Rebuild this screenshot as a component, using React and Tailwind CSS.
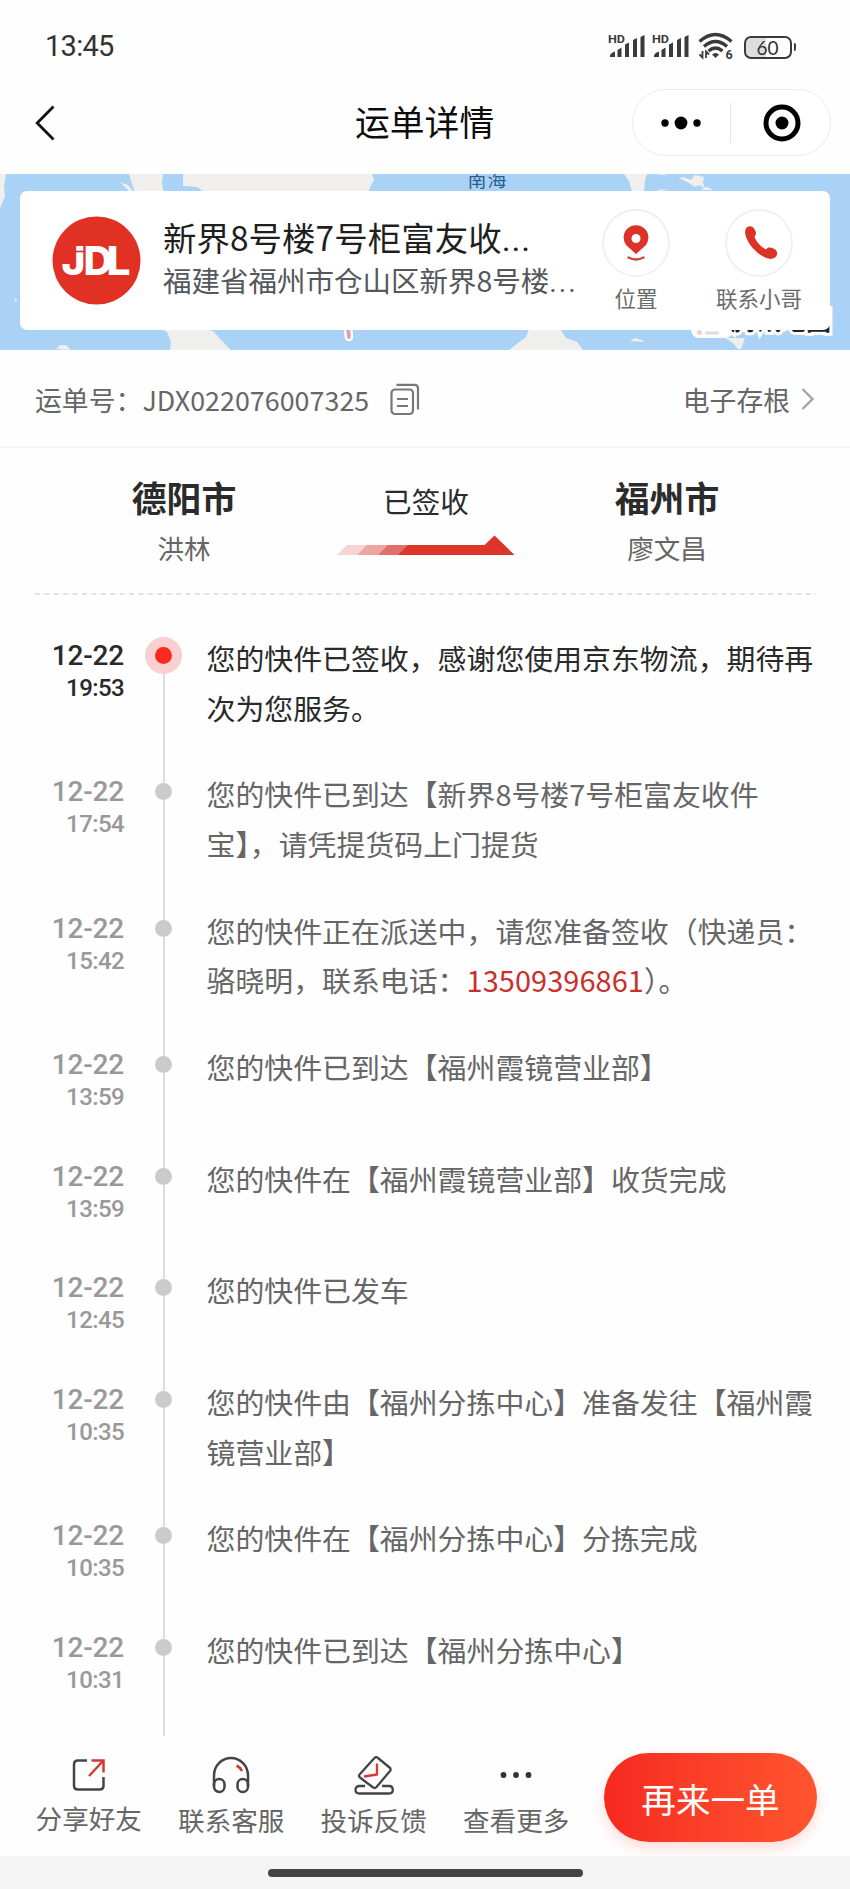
import React from 'react';

const EVENTS = [
    { id: 1, date: '12-22', time: '19:53', text: '您的快件已签收，感谢您使用京东物流，期待再次为您服务。', rows: 2, active: true },
    { id: 2, date: '12-22', time: '17:54', text: '您的快件已到达【新界8号楼7号柜富友收件宝】，请凭提货码上门提货', rows: 2 },
    { id: 3, date: '12-22', time: '15:42', text: '您的快件正在派送中，请您准备签收（快递员：骆晓明，联系电话：', phone: '13509396861', tail: '）。', rows: 2 },
    { id: 4, date: '12-22', time: '13:59', text: '您的快件已到达【福州霞镜营业部】', rows: 1 },
    { id: 5, date: '12-22', time: '13:59', text: '您的快件在【福州霞镜营业部】收货完成', rows: 1 },
    { id: 6, date: '12-22', time: '12:45', text: '您的快件已发车', rows: 1 },
    { id: 7, date: '12-22', time: '10:35', text: '您的快件由【福州分拣中心】准备发往【福州霞镜营业部】', rows: 2 },
    { id: 8, date: '12-22', time: '10:35', text: '您的快件在【福州分拣中心】分拣完成', rows: 1 },
    { id: 9, date: '12-22', time: '10:31', text: '您的快件已到达【福州分拣中心】', rows: 1 },
];

const Signal = () => (
    <svg className="overflow-visible" width="37" height="24" viewBox="0 0 37 24" fill="#3a3a3a">
        <text x="-1" y="8.600" fontSize="11.500" fontWeight="700" textLength="17" lengthAdjust="spacingAndGlyphs" fontFamily="Roboto, sans-serif">HD</text>
        <path d="M1 23v-1.500q1-3 5-4V23zM8.500 23v-7l4-2.500V23zM16 23V10.500l4-2v14.500zM24 23V6l4-2V23zM31.500 23V3l4-2v22z" />
    </svg>
);

const Wifi = () => (
    <svg className="overflow-visible" width="36" height="27" viewBox="0 0 36 27" fill="none" stroke="#3a3a3a">
        <path d="M1.500 8.500Q17.500-5.500 33.500 8.500" strokeWidth="3.400" />
        <path d="M6 13.500Q17.500 3.500 29 13.500" strokeWidth="3.400" />
        <path d="M10.500 18Q17.500 12 24.500 18" strokeWidth="3.400" />
        <path d="M14 21.500Q17.500 18.500 21 21.500L17.500 25z" fill="#3a3a3a" stroke="none" />
        <path d="M4.500 18v6.500L1.500 21.500M8 25v-6.500l3 3" strokeWidth="1.800" />
        <text x="27.500" y="25.500" fontSize="12.500" fontWeight="700" fill="#3a3a3a" stroke="none" fontFamily="Roboto, sans-serif">6</text>
    </svg>
);

const StatusBar = () => (
    <div className="flex h-[70px] items-start justify-between pl-[45px] pr-[54px]">
        <span className="mt-[29px] font-['Roboto'] text-[29px] leading-[34px] tracking-[-0.7px] text-[#333]">13:45</span>
        <div className="mt-[34px] flex">
            <Signal />
            <div className="ml-[7px]"><Signal /></div>
            <div className="ml-[8px] -mt-px"><Wifi /></div>
            <div className="ml-[10px] flex items-center">
                <div className="flex h-[23px] w-[48px] items-center justify-center rounded-[7px] border-2 border-[#3a3a3a] bg-linear-to-r from-[#dedede] from-45% to-white to-45% font-['Lato'] text-[19px] leading-[19px] text-[#333]">60</div>
                <div className="ml-[2px] h-[8px] w-[2.5px] rounded-r bg-[#3a3a3a]" />
            </div>
        </div>
    </div>
);

const Header = () => (
    <div className="flex h-[104px] items-start pt-[19px]">
        <svg className="ml-[34px] mt-[15px]" width="24" height="38" viewBox="0 0 24 38" fill="none" stroke="#111" strokeWidth="2.800">
            <path d="M19.500 2.500L3.200 19L19.500 35.500" />
        </svg>
        <h1 className="ml-[297px] mt-[7px] text-[34.8px] leading-[50px] text-[#0c0c0c]">运单详情</h1>
        <div className="ml-auto mr-[19px] flex h-[67px] w-[199px] items-center rounded-full border border-[#ececec] bg-white">
            <div className="flex flex-1 justify-center">
                <svg width="40" height="14" viewBox="0 0 40 14">
                    <circle cx="4" cy="7" r="3.700" />
                    <circle cx="20" cy="7" r="6.400" />
                    <circle cx="36" cy="7" r="3.700" />
                </svg>
            </div>
            <div className="h-[40px] w-px bg-[#e3e3e3]" />
            <div className="flex flex-1 justify-center pl-[3px]">
                <svg width="38" height="38" viewBox="0 0 38 38">
                    <circle cx="19" cy="19" r="16" fill="none" stroke="#000" strokeWidth="5" />
                    <circle cx="19" cy="19" r="6.500" />
                </svg>
            </div>
        </div>
    </div>
);

const MapBackground = () => (
    <svg className="absolute inset-0" width="850" height="176" viewBox="0 0 850 176">
        <rect width="850" height="176" fill="#aad2f6" />
        <g fill="#f0efed">
            <path d="M129 0L131 7L134 16L134 20H164L162 9L163 0z" />
            <path d="M183 0V12L197 13L207 20H368L370 13L374 6L372 0z" />
            <path d="M0 0H6L4 12L5 22L0 34zM14 127l2 -3l1 4zM57 150l2 -1z" />
            <path d="M120 8l8 3l5 6h-4zM56 175l4 -4l6 0l5 5z" />
            <path d="M158 153L167 158L171 168L170 176H231L221 166L214 158L204 153z" />
            <path d="M624 0L629 7L632 18H644L645 6L647 0z" />
            <path d="M655 0h12l-3 1zM679 4l4 -1l8 3l4 -5l9 2l-1 6l2 5l-6 -3l-4 2l-6 -4zM656 17l5 -2l7 1zM700 16h13l-6 -3z" />
            <path d="M531 150L526 163L518 169L509 176H583L577 168L566 164L560 155L558 150z" />
            <path d="M560 172l3 -4l6 4zM630 167l5 -3l7 2l2 2zM725 164l8 5l5 6l3 0l4 -11z" />
        </g>
        <text x="467.500" y="12.500" fontSize="19" letterSpacing="1" fill="#255f8e" fontFamily="Noto Sans CJK SC, sans-serif">南海</text>
        <path d="M347.500 148L349 163" stroke="#fff" strokeWidth="8.500" strokeLinecap="round" />
        <path d="M347.500 148L349 163" stroke="#dba3ae" strokeWidth="4" strokeLinecap="round" />
        <rect x="691" y="140" width="42" height="24" rx="8" fill="#fff" />
        <circle cx="699.500" cy="158.500" r="2.500" fill="#f2cfc8" />
        <path d="M705 159h14" stroke="#ddd" strokeWidth="3" />
        <text x="731" y="156" fontSize="25" fontWeight="700" fill="#222" stroke="#fff" strokeWidth="6" paintOrder="stroke" fontFamily="Noto Sans CJK SC, sans-serif">腾讯地图</text>
    </svg>
);

const Logo = () => (
    <svg className="ml-[32px] mt-[25px] shrink-0" width="89" height="89" viewBox="0 0 89 89">
        <circle cx="44.500" cy="44.500" r="44" fill="#e13125" />
        <g fill="#fff" fontSize="40" fontWeight="800" fontFamily="Inter, sans-serif">
            <text x="9.500" y="58.500" textLength="24" lengthAdjust="spacingAndGlyphs">J</text>
            <text x="31.500" y="58.500" textLength="29" lengthAdjust="spacingAndGlyphs">D</text>
            <text x="54.500" y="58.500" textLength="24" lengthAdjust="spacingAndGlyphs">L</text>
        </g>
        {/* cut that separates the dot of the j from its stem */}
        <path d="M22 35.500H33" stroke="#e13125" strokeWidth="1.600" />
    </svg>
);

const CardAction = ({ label, className, children }) => (
    <button className={className}>
        <span className="flex h-[68px] w-[68px] items-center justify-center rounded-full border-2 border-[#f0f0f0] bg-white">{children}</span>
        <span className="mt-[7px] whitespace-nowrap text-[21.5px] leading-[28px] text-[#6b6b6b]">{label}</span>
    </button>
);

const AddressCard = () => (
    <div className="relative h-[176px] overflow-hidden px-[20px] pt-[17px]">
        <MapBackground />
        <div className="relative flex h-[139px] items-start rounded-[7px] bg-white">
            <Logo />
            <div className="ml-[22px] w-[420px]">
                <div className="mt-[23px] whitespace-nowrap text-[33.5px] leading-[46px] text-[#1f1f1f]">
                    新界8号楼7号柜富友收<span className="font-['Roboto'] tracking-[1px]">...</span>
                </div>
                <div className="-mt-[2px] whitespace-nowrap text-[28.5px] leading-[38px] text-[#55575b]">
                    福建省福州市仓山区新界8号楼<span className="font-['Roboto'] tracking-[2px]">...</span>
                </div>
            </div>
            <CardAction label="位置" className="ml-[-2px] mt-[18px] flex w-[110px] flex-col items-center">
                <svg width="28" height="38" viewBox="0 0 28 38">
                    <path d="M14 30L4.500 21.500A12.400 12.400 0 1 1 23.500 21.500z" fill="#db3327" />
                    <circle cx="14" cy="14.500" r="4.500" fill="#fff" />
                    <path d="M6.500 33.500Q14 37.500 21.500 33.500" fill="none" stroke="#c8463d" strokeWidth="2.400" strokeLinecap="round" />
                </svg>
            </CardAction>
            <CardAction label="联系小哥" className="ml-[13px] mt-[18px] flex w-[110px] flex-col items-center">
                <svg className="ml-[4px]" width="34" height="36" viewBox="0 0 34 36">
                    <path d="M2 3.500C4 .5 8 .5 10 3.500C12 6.500 13 9 10.500 11.500C11.500 16 17 22 22 24.500C23.500 21.500 27 22 30.500 24C34 26.500 34 30 31 32.500C27.500 35 22.500 34 17.500 30.500C10.500 26 4.500 19 2 12C.8 8.500.7 5.500 2 3.500Z" fill="#db3327" />
                </svg>
            </CardAction>
        </div>
    </div>
);

const WaybillRow = () => (
    <div className="flex h-[98px] items-center border-b-2 border-[#f4f4f4] pb-px pl-[35px] pr-[36px] text-[26.8px] leading-[40px] text-[#666]">
        <span className="mt-[5px] tracking-[0.05px]">运单号：JDX022076007325</span>
        <svg className="ml-[21px] mt-[3px]" width="30" height="33" viewBox="0 0 30 33" fill="none" stroke="#777" strokeWidth="2.200">
            <rect x="1.500" y="6.500" width="21.500" height="24.500" rx="3.500" />
            <path d="M6.500 1.800H24.500Q28 1.800 28 5.300V26.500M7 16H18M7 23H18" />
        </svg>
        <span className="ml-auto mt-[5px]">电子存根</span>
        <svg className="ml-[11px] mt-[2px]" width="13" height="24" viewBox="0 0 13 24" fill="none" stroke="#a5a5a5" strokeWidth="2.400">
            <path d="M1.500 2L11.500 12L1.500 22" />
        </svg>
    </div>
);

const City = ({ name, person, className }) => (
    <div className={className}>
        <span className="text-[34.8px] font-bold leading-[50px] text-[#2b2b2b]">{name}</span>
        <span className="mt-[6px] text-[26.5px] leading-[40px] text-[#666]">{person}</span>
    </div>
);

const RouteSummary = () => (
    <div className="flex h-[145px] items-start">
        <City name="德阳市" person="洪林" className="ml-[104px] mt-[24px] flex w-[160px] flex-col items-center" />
        <div className="ml-[62px] mt-[32px] flex w-[200px] flex-col items-center">
            <span className="text-[28.6px] leading-[41px] text-[#2b2b2b]">已签收</span>
            <svg className="mt-[14px]" width="178" height="22" viewBox="0 0 178 22">
                <path d="M0 20L10 10H33L23 20z" fill="#f7d3d2" />
                <path d="M20 20L30 10H53L43 20z" fill="#eda5a4" />
                <path d="M41 20L51 10H73L63 20z" fill="#e1706c" />
                <path d="M61 20L71 10H147.500L157.500 .5L177.500 20z" fill="#de352b" />
            </svg>
        </div>
        <City name="福州市" person="廖文昌" className="ml-[61px] mt-[24px] flex w-[160px] flex-col items-center" />
    </div>
);

const TimelineItem = ({ item }) => (
    <div className={item.rows === 2 ? 'flex h-[136.4px]' : 'flex h-[111.6px]'}>
        <div className={`w-[124px] pt-[7px] text-right font-['Roboto'] leading-[32px] ${item.active ? 'text-[#2a2a2a]' : 'text-[#999]'}`}>
            <div className="text-[28px] font-medium tracking-[-0.2px]">{item.date}</div>
            <div className="text-[24px] font-medium tracking-[-0.6px]">{item.time}</div>
        </div>
        <div className="ml-[20px] flex w-[39px] flex-col items-center">
            {item.active ? (
                <>
                    <div className="h-[4px]" />
                    <div className="flex h-[37px] w-[37px] items-center justify-center rounded-full bg-[#f9d0cf]">
                        <div className="h-[17px] w-[17px] rounded-full bg-[#fb2a1d]" />
                    </div>
                </>
            ) : (
                <>
                    <div className="h-[14px] w-[2px] bg-[#dcdcdc]" />
                    <div className="h-[17px] w-[17px] rounded-full bg-[#cbcbcb]" />
                </>
            )}
            <div className="w-[2px] flex-1 bg-[#dcdcdc]" />
        </div>
        <p className={`ml-[23.500px] w-[612px] text-[28.9px] leading-[49.7px] ${item.active ? 'text-[#2a2a2a]' : 'text-[#666]'}`}>
            {item.text}
            {item.phone && <span className="tracking-[0.1px] text-[#c9302c]">{item.phone}</span>}
            {item.tail}
        </p>
    </div>
);

const ShareIcon = () => (
    <svg width="34" height="34" viewBox="0 0 34 34" fill="none" strokeWidth="2.500">
        <path d="M15 2.500H6Q2 2.500 2 6.500V27.500Q2 31.500 6 31.500H27.500Q31.500 31.500 31.500 27.500V19" stroke="#444" />
        <path d="M17 18L31 3M19.500 2.500H31.500V14.500" stroke="#d23a33" />
    </svg>
);

const HeadphoneIcon = () => (
    <svg width="38" height="38" viewBox="0 0 38 38" fill="none" strokeWidth="2.500">
        <path d="M2 30V19.500A17 17.500 0 0 1 36 19.500V30" stroke="#444" />
        <rect x="2" y="23" width="10.500" height="13" rx="5.200" stroke="#444" />
        <rect x="25.500" y="23" width="10.500" height="13" rx="5.200" stroke="#444" />
        <path d="M24.500 9.500Q28 11 30 15" stroke="#d23a33" />
    </svg>
);

const FeedbackIcon = () => (
    <svg width="40" height="40" viewBox="0 0 40 40" fill="none" strokeWidth="2.300" strokeLinejoin="round">
        <path d="M20 3.500Q22 1 24 3L35.500 12.500Q37.500 14 36 16L22.500 32Q20.500 34 18.500 32L6 22.500Q4 21 6 19z" stroke="#444" />
        <path d="M23 8.500V19.500L10 21.500" stroke="#d23a33" />
        <path d="M11 31H5.500Q1.500 31 1.500 35Q1.500 38.500 5.500 38.500H35Q38.800 38.500 38.800 35Q38.800 31 35 31H28" stroke="#444" />
    </svg>
);

const MoreIcon = () => (
    <svg width="34" height="8" viewBox="0 0 34 8" fill="#333">
        <circle cx="4.500" cy="4" r="2.900" />
        <circle cx="17" cy="4" r="2.900" />
        <circle cx="29.500" cy="4" r="2.900" />
    </svg>
);

const TABS = [
    { label: '分享好友', icon: <ShareIcon />, labelClass: 'mt-[3px]' },
    { label: '联系客服', icon: <HeadphoneIcon />, labelClass: 'mt-[5px]' },
    { label: '投诉反馈', icon: <FeedbackIcon />, labelClass: 'mt-[5px]' },
    { label: '查看更多', icon: <MoreIcon />, labelClass: 'mt-[5px]' },
];

const BottomBar = () => (
    <div className="flex h-[120px] items-start pl-[17.500px] pr-[33px]">
        {TABS.map((tab) => (
            <button key={tab.label} className="flex w-[142.500px] flex-col items-center pt-[18px] text-[26.6px] leading-[38px] text-[#666]">
                <span className="flex h-[42px] items-center">{tab.icon}</span>
                <span className={tab.labelClass}>{tab.label}</span>
            </button>
        ))}
        <button className="ml-auto mt-[16.500px] h-[89px] w-[213px] rounded-full bg-linear-to-r from-[#f6281f] to-[#ff5430] pt-px text-[34.6px] leading-[50px] text-white shadow-[0_6px_14px_rgba(250,60,40,0.18)]">
            再来一单
        </button>
    </div>
);

const App = () => {
    return (
        <div className="flex h-[1889px] w-[850px] flex-col overflow-hidden bg-[#fefefe] font-['Noto_Sans_CJK_SC',sans-serif]">
            <StatusBar />
            <Header />
            <AddressCard />
            <WaybillRow />
            <RouteSummary />
            <svg className="ml-[35px] shrink-0" width="781" height="2" viewBox="0 0 781 2">
                <path d="M0 1H781" stroke="#e2e2e2" strokeWidth="2" strokeDasharray="5 4.400" />
            </svg>
            <div className="flex-1 overflow-hidden pt-[38px]">
                {EVENTS.map((item) => (
                    <TimelineItem key={item.id} item={item} />
                ))}
            </div>
            <BottomBar />
            <div className="flex h-[33px] justify-center bg-[#f5f5f5] pt-[13px]">
                <div className="h-[8px] w-[315px] rounded-full bg-[#444]" />
            </div>
        </div>
    );
};

export default App;
